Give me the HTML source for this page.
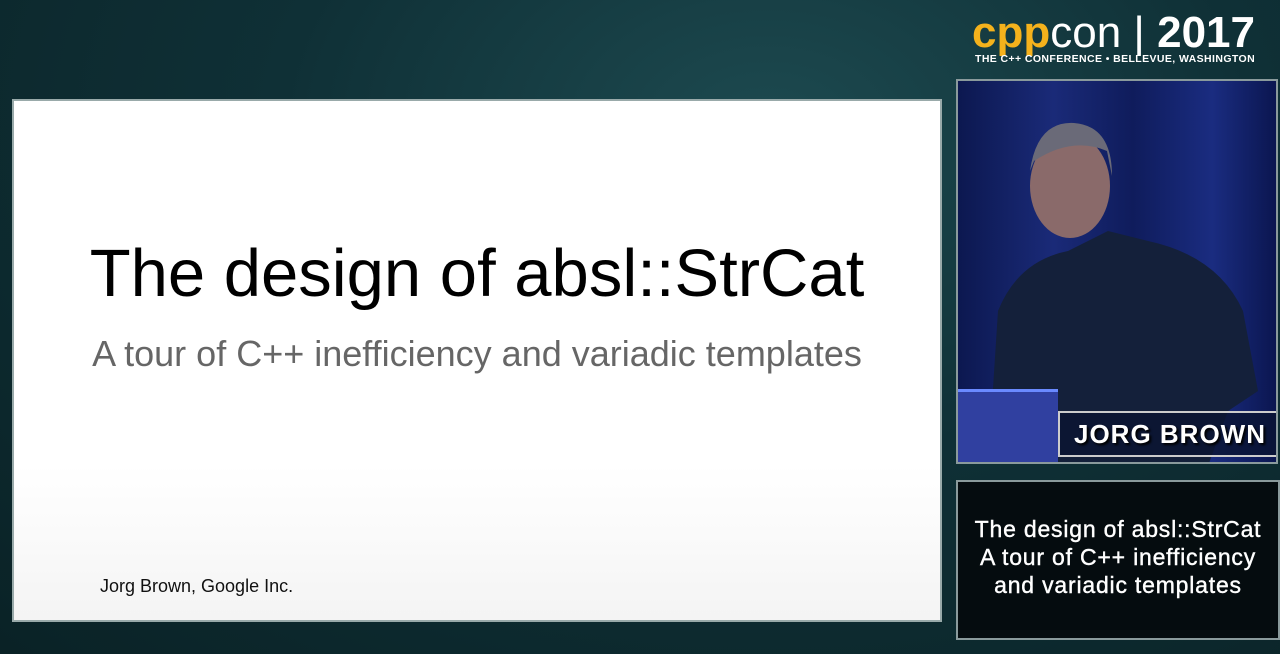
<!DOCTYPE html>
<html><head><meta charset="utf-8"><style>
body{margin:0;width:1280px;height:654px;overflow:hidden;background:radial-gradient(ellipse at 60% 20%,#1d4a50 0%,#0f3036 45%,#0a2226 100%);font-family:"Liberation Sans",sans-serif;position:relative}
.slide{position:absolute;left:12px;top:99px;width:926px;height:519px;background:linear-gradient(#fff 70%,#f4f4f4);border:2px solid #9aa;}
.t1{position:absolute;left:0;width:926px;top:134px;text-align:center;font-size:67px;color:#000}
.t2{position:absolute;left:0;width:926px;top:232px;text-align:center;font-size:36px;color:#666}
.au{position:absolute;left:86px;top:475px;font-size:18px;color:#111}
.vid{position:absolute;left:956px;top:79px;width:322px;height:385px;border:2px solid #8a9a9c;box-sizing:border-box;overflow:hidden;background:linear-gradient(90deg,#0c1850 0%,#1a2a78 30%,#0f1c5c 55%,#1a2c80 80%,#0b1650 100%)}
.name{position:absolute;left:100px;top:330px;width:230px;height:42px;background:rgba(10,20,50,.8);border:2px solid #ccc;color:#fff;font-weight:bold;font-size:26px;line-height:42px;padding-left:14px;letter-spacing:1px;text-shadow:2px 2px 2px #000}
.box{position:absolute;left:956px;top:480px;width:324px;height:160px;border:2px solid #8a9a9c;box-sizing:border-box;background:#050c0f;color:#fff;font-size:23px;letter-spacing:0.8px;-webkit-text-stroke:0.4px #fff;text-align:center;line-height:28px;padding-top:33px}
.logo{position:absolute;left:972px;top:8px;font-size:44px;color:#fff;white-space:nowrap}
.sub{position:absolute;left:975px;top:53px;font-size:10.5px;font-weight:bold;color:#fff;letter-spacing:.4px}
</style></head><body>
<div class="logo"><span style="color:#f5b21c;font-weight:bold">cpp</span><span>con</span> <span style="font-weight:300">|</span> <b>2017</b></div>
<div class="sub">THE C++ CONFERENCE • BELLEVUE, WASHINGTON</div>
<div class="slide"><div class="t1">The design of absl::StrCat</div><div class="t2">A tour of C++ inefficiency and variadic templates</div><div class="au">Jorg Brown, Google Inc.</div></div>
<div class="vid">
<svg width="322" height="385" style="position:absolute;left:0;top:0">
<path d="M30 385 L40 230 Q60 180 110 170 L150 150 L190 160 Q260 175 285 230 L300 310 L270 330 L250 385 Z" fill="#14203a"/>
<ellipse cx="112" cy="105" rx="40" ry="52" fill="#8a6a6a"/>
<path d="M72 90 Q79 40 116 42 Q154 45 154 95 L149 70 Q114 55 76 80 Z" fill="#6a6a78"/>
<rect x="0" y="310" width="100" height="75" fill="#3040a0"/>
<rect x="0" y="308" width="100" height="3" fill="#6a8aff"/>
</svg>
<div class="name">JORG BROWN</div></div>
<div class="box">The design of absl::StrCat<br>A tour of C++ inefficiency<br>and variadic templates</div>
</body></html>
